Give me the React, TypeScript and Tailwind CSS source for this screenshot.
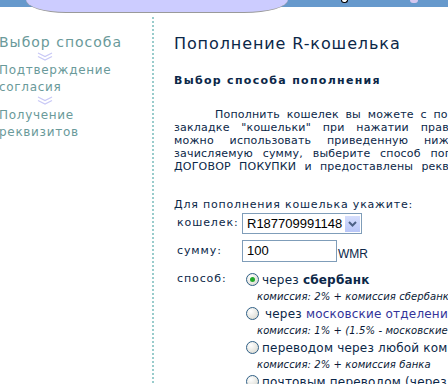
import React from "react";

const navy = "text-[#0b2748]";

function Chevrons() {
  return (
    <svg width="16" height="9" viewBox="0 0 16 9" className="ml-[37px]">
      <polyline points="1,1 8,4.5 15,1" fill="none" stroke="#c9c9f6" strokeWidth="1.2" />
      <polyline points="1,4.5 8,8 15,4.5" fill="none" stroke="#c9c9f6" strokeWidth="1.2" />
    </svg>
  );
}

function Radio({ checked }: { checked?: boolean }) {
  return (
    <span className="flex h-[13px] w-[13px] shrink-0 items-center justify-center rounded-full border border-[#2f5f86] bg-[radial-gradient(circle_at_35%_30%,#ffffff_0,#e6e6e0_60%,#d2cfc6_100%)]">
      {checked && <span className="h-[5px] w-[5px] rounded-full bg-[#22a82a]" />}
    </span>
  );
}

function Option({
  checked,
  label,
  fee,
  gap = "gap-[3px]",
}: {
  checked?: boolean;
  label: React.ReactNode;
  fee: string;
  gap?: string;
}) {
  return (
    <div>
      <div className={`flex h-[17px] items-center ${gap} text-[12px] tracking-[0.2px] ${navy}`}>
        <Radio checked={checked} />
        <span className="whitespace-nowrap">{label}</span>
      </div>
      <div className="h-[17px] whitespace-nowrap pl-[11px] text-[10px] italic leading-[17px] tracking-[0.1px] text-[#0a1a36]">
        {fee}
      </div>
    </div>
  );
}

export default function App() {
  return (
    <div className="h-[384px] w-[448px] overflow-hidden bg-white font-['DejaVu_Sans',Verdana,sans-serif]">
      {/* header tab */}
      <div className="flex h-[13px] items-start bg-[linear-gradient(to_bottom,#6699cc_7px,#ffffff_7px)]">
        <div className="ml-[26px] h-[13px] w-[262px] shrink-0 rounded-bl-[40px_13px] rounded-br-[44px_13px] border-b border-[#9a9a9a] bg-[#ccccff]" />
        <div className="ml-[53px] h-[3px] w-[7px] shrink-0 rounded-b-[3px] border border-t-0 border-black bg-white" />
        <div className="ml-[62px] h-[3px] w-[8px] shrink-0 rounded-b-[4px] bg-[#d6c8f0]" />
      </div>

      <div className="flex">
        {/* left steps */}
        <div className="w-[152px] shrink-0 pt-[20px] text-[#6a9a9a]">
          <div className="-ml-[1px] text-[14px] leading-[18px] tracking-[1px]">Выбор способа</div>
          <div className="mt-[1px]">
            <Chevrons />
          </div>
          <div className="-ml-[1px] mt-[1px] text-[12px] leading-[17px] tracking-[0.7px]">
            Подтверждение
            <br />
            согласия
          </div>
          <div>
            <Chevrons />
          </div>
          <div className="-ml-[1px] mt-[2px] text-[12px] leading-[17px] tracking-[0.7px]">
            Получение
            <br />
            реквизитов
          </div>
        </div>

        {/* dotted divider */}
        <div className="mt-[4px] h-[380px] w-[2px] shrink-0 bg-[repeating-linear-gradient(to_bottom,#99cccc_0_2px,transparent_2px_4px)]" />

        {/* content */}
        <div className={`w-[420px] shrink-0 pl-[20px] pt-[21px] ${navy}`}>
          <h1 className="whitespace-nowrap text-[16px] leading-[20px] tracking-[0.9px]">Пополнение R-кошелька</h1>
          <h2 className="mt-[20px] whitespace-nowrap text-[11px] font-bold leading-[14px] tracking-[1.3px]">
            Выбор способа пополнения
          </h2>

          <div className="mt-[20px] whitespace-nowrap text-[11px] leading-[13px] tracking-[0.2px]">
            <div className="pl-[41px] [word-spacing:3px]">Пополнить кошелек вы можете с помощью программы</div>
            <div className="[word-spacing:8px]">закладке "кошельки" при нажатии правой кнопки</div>
            <div className="[word-spacing:12px]">можно использовать приведенную ниже форму</div>
            <div className="[word-spacing:6px]">зачисляемую сумму, выберите способ пополнения</div>
            <div className="[word-spacing:4.5px]">ДОГОВОР ПОКУПКИ и предоставлены реквизиты</div>
          </div>

          <div className="mt-[25px] whitespace-nowrap text-[11px] leading-[13px] tracking-[0.8px]">
            Для пополнения кошелька укажите:
          </div>

          <div className="mt-[2px] grid grid-cols-[68px_auto] items-center gap-y-[6px] text-[11px]">
            <span className="pl-[3px] tracking-[0.9px]">кошелек:</span>
            <div className="flex h-[21px] w-[120px] items-center justify-between border border-[#7f9db9] pl-[4px] pr-[1px] font-['Liberation_Sans',Arial,sans-serif] text-[13px] text-black">
              <span>R187709991148</span>
              <span className="flex h-[16px] w-[15px] items-center justify-center bg-[linear-gradient(to_bottom,#d6defc,#b9c6f8)]">
                <svg width="9" height="6" viewBox="0 0 9 6">
                  <polyline points="1,1 4.5,4.5 8,1" fill="none" stroke="#4d6185" strokeWidth="2" />
                </svg>
              </span>
            </div>

            <span className="pl-[3px] tracking-[0.9px]">сумму:</span>
            <div className="flex items-end">
              <div className="flex h-[22px] w-[95px] items-center border border-[#7f9db9] pl-[4px] font-['Liberation_Sans',Arial,sans-serif] text-[13px] text-black">
                100
              </div>
              <span className="ml-[1px] font-['Liberation_Sans',Arial,sans-serif] text-[12px] leading-[15px]">WMR</span>
            </div>
          </div>

          <div className="mt-[10px] grid grid-cols-[72px_auto]">
            <span className="pl-[3px] text-[11px] leading-[14px] tracking-[0.9px]">способ:</span>
            <div className="-mt-[1px]">
              <Option
                checked
                label={
                  <>
                    через <b>сбербанк</b>
                  </>
                }
                fee="комиссия: 2% + комиссия сбербанка"
              />
              <Option
                gap="gap-[6px]"
                label={
                  <>
                    через <span className="text-[#333399]">московские отделения</span>
                  </>
                }
                fee="комиссия: 1% + (1.5% - московские"
              />
              <Option label="переводом через любой коммерческий" fee="комиссия: 2% + комиссия банка" />
              <Option label="почтовым переводом (через почту)" fee="комиссия: 2% + почтовый сбор" />
            </div>
          </div>
        </div>
      </div>
    </div>
  );
}
